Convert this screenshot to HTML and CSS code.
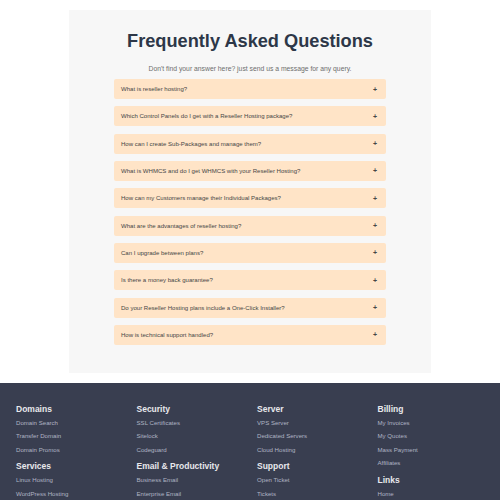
FILE: index.html
```html
<!DOCTYPE html>
<html lang="en">
<head>
   <title>FAQ</title>
   <link rel="stylesheet" href="styles.css">
</head>
<body>
   <section class="faq">
      <h1 class="faq-title">Frequently Asked Questions</h1>
      <p class="faq-sub">Don't find your answer here? just send us a message for any query.</p>
      <ul class="faq-list">
         <li class="faq-item"><span>What is reseller hosting?</span><span class="plus">+</span></li>
         <li class="faq-item"><span>Which Control Panels do I get with a Reseller Hosting package?</span><span class="plus">+</span></li>
         <li class="faq-item"><span>How can I create Sub-Packages and manage them?</span><span class="plus">+</span></li>
         <li class="faq-item"><span>What is WHMCS and do I get WHMCS with your Reseller Hosting?</span><span class="plus">+</span></li>
         <li class="faq-item"><span>How can my Customers manage their Individual Packages?</span><span class="plus">+</span></li>
         <li class="faq-item"><span>What are the advantages of reseller hosting?</span><span class="plus">+</span></li>
         <li class="faq-item"><span>Can I upgrade between plans?</span><span class="plus">+</span></li>
         <li class="faq-item"><span>Is there a money back guarantee?</span><span class="plus">+</span></li>
         <li class="faq-item"><span>Do your Reseller Hosting plans include a One-Click Installer?</span><span class="plus">+</span></li>
         <li class="faq-item"><span>How is technical support handled?</span><span class="plus">+</span></li>
      </ul>
   </section>

   <footer class="footer">
      <div class="col">
         <h4>Domains</h4>
         <a href="#">Domain Search</a>
         <a href="#">Transfer Domain</a>
         <a href="#">Domain Promos</a>
         <h4>Services</h4>
         <a href="#">Linux Hosting</a>
         <a href="#">WordPress Hosting</a>
      </div>
      <div class="col">
         <h4>Security</h4>
         <a href="#">SSL Certificates</a>
         <a href="#">Sitelock</a>
         <a href="#">Codeguard</a>
         <h4>Email &amp; Productivity</h4>
         <a href="#">Business Email</a>
         <a href="#">Enterprise Email</a>
      </div>
      <div class="col">
         <h4>Server</h4>
         <a href="#">VPS Server</a>
         <a href="#">Dedicated Servers</a>
         <a href="#">Cloud Hosting</a>
         <h4>Support</h4>
         <a href="#">Open Ticket</a>
         <a href="#">Tickets</a>
      </div>
      <div class="col">
         <h4>Billing</h4>
         <a href="#">My Invoices</a>
         <a href="#">My Quotes</a>
         <a href="#">Mass Payment</a>
         <a href="#">Affiliates</a>
         <h4>Links</h4>
         <a href="#">Home</a>
      </div>
   </footer>
</body>
</html>
```

FILE: styles.css
```css
/* page reset */
html, body, h1, h4, p, ul, li {
   margin: 0;
   padding: 0;
}
body {
   background-color: white;
   font-family: "Liberation Sans", Arial, sans-serif;
}

/* faq panel */
.faq {
   width: 362px;
   margin: 10px auto 0 auto;
   padding: 19px 0 28px 0;
   background-color: rgb(247, 247, 247);
   box-sizing: border-box;
}
.faq-title {
   font-size: 18.2px;
   font-weight: bold;
   color: rgb(45, 55, 72);
   text-align: center;
   line-height: 24px;
}
.faq-sub {
   font-size: 6.8px;
   color: rgb(110, 110, 110);
   text-align: center;
   margin-top: 11px;
   line-height: 10px;
}
.faq-list {
   list-style: none;
   width: 272px;
   margin: 5px auto 0 auto;
}
.faq-item {
   display: flex;
   justify-content: space-between;
   align-items: center;
   height: 20px;
   margin-bottom: 7.33px;
   padding: 0 9px 0 7px;
   background-color: rgb(255, 228, 199);
   border-radius: 2px;
   font-size: 6.05px;
   color: rgb(70, 70, 70);
}
.faq-item:last-child {
   margin-bottom: 0;
}
.plus {
   font-size: 7px;
   font-weight: bold;
   color: rgb(70, 70, 70);
}

/* footer */
.footer {
   margin-top: 10px;
   background-color: rgb(57, 62, 80);
   display: grid;
   grid-template-columns: repeat(4, 120.5px);
   padding: 20px 0 0 16px;
   height: 117px;
   box-sizing: border-box;
   overflow: hidden;
}
.col {
   display: flex;
   flex-direction: column;
}
.col h4 {
   font-size: 8.5px;
   font-weight: bold;
   color: rgb(232, 232, 236);
   line-height: 12px;
   margin-top: 4px;
   margin-bottom: 1px;
}
.col h4:first-child {
   margin-top: 0;
}
.col a {
   font-size: 6.1px;
   color: rgb(175, 180, 196);
   text-decoration: none;
   line-height: 13.5px;
}
```
